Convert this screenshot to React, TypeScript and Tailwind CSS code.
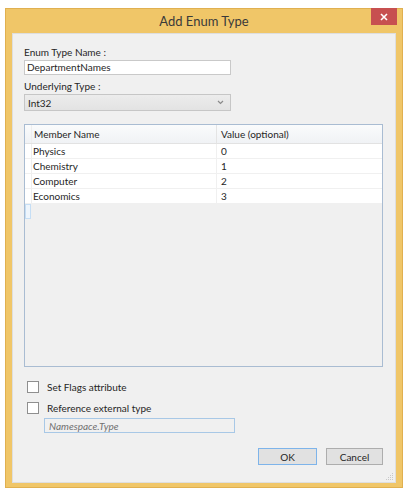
import React from "react";

const rows = [
  { name: "Physics", value: "0" },
  { name: "Chemistry", value: "1" },
  { name: "Computer", value: "2" },
  { name: "Economics", value: "3" },
];

export default function App() {
  return (
    <div className="w-[409px] h-[491px] bg-white pt-[8px] pl-[5px] font-['Lato','Noto_Sans',sans-serif] text-[#262626]">
      <div className="w-[398px] h-[480px] bg-[#f0c668] border border-[#e0b050] flex flex-col">
        <div className="relative h-[24px] flex items-center justify-center">
          <span className="text-[13px] text-[#3a3a3a] leading-none mt-[1px]">Add Enum Type</span>
          <div className="absolute right-[5px] top-[-1px] w-[26px] h-[17px] bg-[#c75050] flex items-center justify-center">
            <svg width="8" height="8" viewBox="0 0 8 8">
              <path d="M1 1 L7 7 M7 1 L1 7" stroke="white" strokeWidth="1.6" />
            </svg>
          </div>
        </div>
        <div className="relative mx-[6px] mb-[4px] flex-1 bg-[#f0f0f0] border border-[#dedede] pl-[11px] pr-[12px] flex flex-col text-[10px]">
          <div className="mt-[11px] leading-[15px] h-[15px]">Enum Type Name :</div>
          <div className="w-[207px] h-[15px] bg-white border border-[#c9c9c9] leading-[13px] pl-[2px]">
            DepartmentNames
          </div>
          <div className="mt-[4px] leading-[15px] h-[15px]">Underlying Type :</div>
          <div className="w-[207px] h-[17px] bg-gradient-to-b from-[#ececec] to-[#e3e3e3] border border-[#c6c6c6] flex items-center justify-between pl-[3px] pr-[6px]">
            <span className="leading-none">Int32</span>
            <svg width="7" height="5" viewBox="0 0 7 5">
              <path d="M1 1 L3.5 3.5 L6 1" stroke="#8a8a8a" strokeWidth="1.2" fill="none" />
            </svg>
          </div>
          <div className="mt-[13px] w-[359px] h-[243px] border border-[#a9bcd2] bg-[#f0f0f0] flex flex-col">
            <div className="h-[19px] flex bg-gradient-to-b from-[#fafbfc] to-[#f0f2f5] border-b border-[#e2e2e2]">
              <div className="w-[7px] border-r border-[#eeeeee]" />
              <div className="w-[185px] border-r border-[#e4e4e4] pl-[2px] flex items-center">Member Name</div>
              <div className="flex-1 pl-[4px] flex items-center">Value (optional)</div>
            </div>
            {rows.map((r) => (
              <div key={r.name} className="h-[15px] flex bg-white border-b border-[#f0f0f0]">
                <div className="w-[7px] border-r border-[#eeeeee]" />
                <div className="w-[185px] border-r border-[#f0f0f0] pl-[1px] flex items-center">{r.name}</div>
                <div className="flex-1 pl-[4px] flex items-center">{r.value}</div>
              </div>
            ))}
            <div className="w-[6px] h-[15px] border border-[#c5def5] bg-[#eef5fc]" />
          </div>
          <div className="mt-[13px] flex items-center h-[13px] ml-[3px]">
            <div className="w-[12px] h-[12px] border border-[#8f8f8f] bg-white" />
            <span className="ml-[8px] leading-none">Set Flags attribute</span>
          </div>
          <div className="mt-[8px] flex items-center h-[13px] ml-[3px]">
            <div className="w-[12px] h-[12px] border border-[#8f8f8f] bg-white" />
            <span className="ml-[8px] leading-none">Reference external type</span>
          </div>
          <div className="mt-[4px] ml-[20px] w-[191px] h-[15px] border border-[#a8c8e6] bg-[#f0f0f0] pl-[4px] flex items-center italic text-[#707070] leading-none">
            Namespace.Type
          </div>
          <div className="mt-[15px] flex justify-end gap-[9px]">
            <div className="w-[59px] h-[17px] bg-[#e1e1e1] border border-[#7eb4ea] flex items-center justify-center leading-none">OK</div>
            <div className="w-[57px] h-[17px] bg-[#e1e1e1] border border-[#adadad] flex items-center justify-center leading-none">Cancel</div>
          </div>
          <svg className="absolute right-[1px] bottom-[1px]" width="8" height="8" viewBox="0 0 8 8">
            <g fill="#c8c8c8">
              <rect x="6" y="0" width="1" height="1" />
              <rect x="4" y="2" width="1" height="1" />
              <rect x="6" y="2" width="1" height="1" />
              <rect x="2" y="4" width="1" height="1" />
              <rect x="4" y="4" width="1" height="1" />
              <rect x="6" y="4" width="1" height="1" />
              <rect x="0" y="6" width="1" height="1" />
              <rect x="2" y="6" width="1" height="1" />
              <rect x="4" y="6" width="1" height="1" />
              <rect x="6" y="6" width="1" height="1" />
            </g>
          </svg>
        </div>
      </div>
    </div>
  );
}
